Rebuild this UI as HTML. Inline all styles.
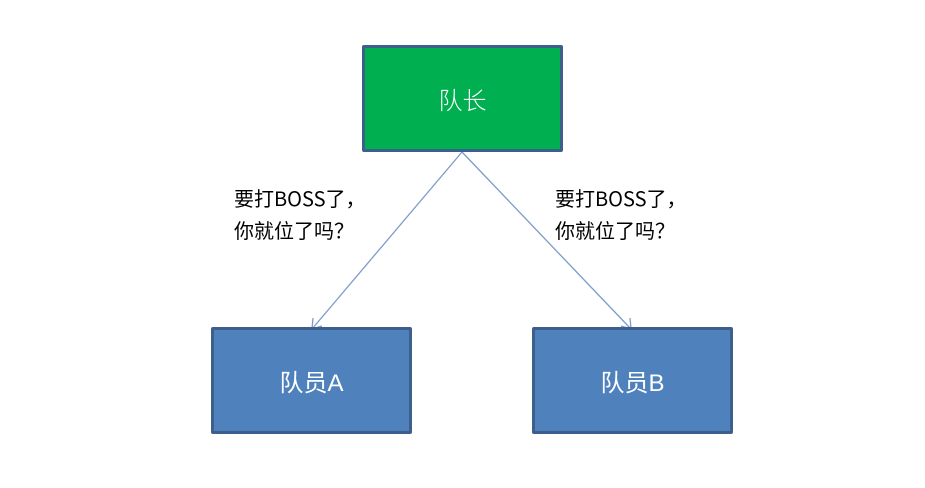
<!DOCTYPE html>
<html><head><meta charset="utf-8"><style>
body{margin:0;width:925px;height:488px;background:#fff;position:relative;overflow:hidden;font-family:"Liberation Sans","Noto Sans CJK SC",sans-serif}
.b{position:absolute;box-sizing:border-box;border:3px solid #3c5f8c;border-radius:2px;color:#fff;font-size:24px;display:flex;align-items:center;justify-content:center}
.t{position:absolute;font-size:20px;line-height:32px;color:#000;font-family:"Noto Sans CJK SC",sans-serif}
</style></head><body>
<svg width="925" height="488" style="position:absolute;left:0;top:0">
<g stroke="#7a9cc8" stroke-width="1.3" fill="none">
<line x1="462" y1="152" x2="312" y2="329"/>
<polyline points="313,318 312,329 322,326"/>
<line x1="462" y1="152" x2="631" y2="329"/>
<polyline points="621,326 631,329 630,318"/>
</g></svg>
<div class="b" style="left:362px;top:45px;width:201px;height:107px;background:#00b050;font-family:'Noto Sans CJK SC',sans-serif;font-weight:300">队长</div>
<div class="b" style="left:211px;top:327px;width:201px;height:107px;background:#4f81bd">队员A</div>
<div class="b" style="left:532px;top:327px;width:201px;height:107px;background:#4f81bd">队员B</div>
<div class="t" style="left:234px;top:182px">要打BOSS了，<br>你就位了吗？</div>
<div class="t" style="left:555px;top:182px">要打BOSS了，<br>你就位了吗？</div>
</body></html>
